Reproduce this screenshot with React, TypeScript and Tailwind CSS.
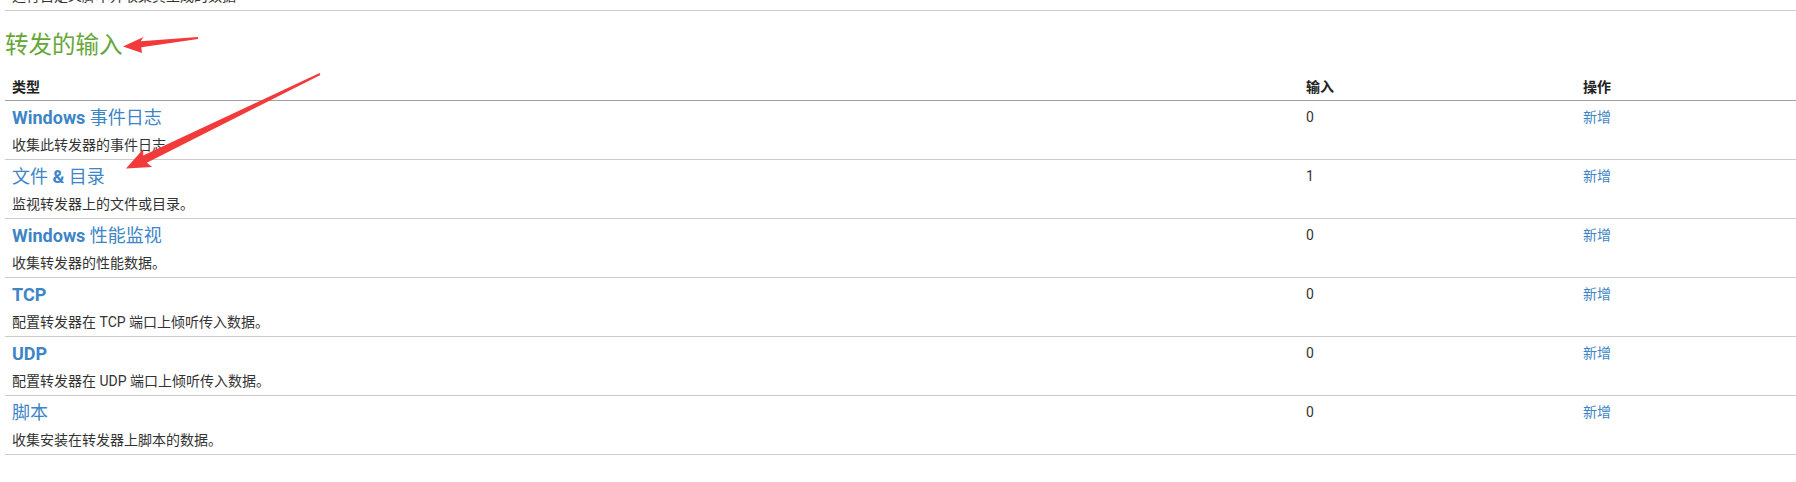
import React from "react";

const FONT = 'Roboto, "Noto Sans CJK SC", sans-serif';

function Title({ text }: { text: string }) {
  const parts = text.split(/([\u4e00-\u9fff]+)/).filter((p) => p.length > 0);
  return (
    <div className="text-[18px] leading-[24px] font-bold text-[#3d85c6]">
      {parts.map((p, i) =>
        /[\u4e00-\u9fff]/.test(p) ? (
          <span key={i} className="font-normal">
            {p}
          </span>
        ) : (
          <span key={i}>{p}</span>
        )
      )}
    </div>
  );
}

const rows = [
  { title: "Windows 事件日志", desc: "收集此转发器的事件日志", count: "0" },
  { title: "文件 & 目录", desc: "监视转发器上的文件或目录。", count: "1" },
  { title: "Windows 性能监视", desc: "收集转发器的性能数据。", count: "0" },
  { title: "TCP", desc: "配置转发器在 TCP 端口上倾听传入数据。", count: "0" },
  { title: "UDP", desc: "配置转发器在 UDP 端口上倾听传入数据。", count: "0" },
  { title: "脚本", desc: "收集安装在转发器上脚本的数据。", count: "0" },
];

export default function App() {
  return (
    <div
      className="relative w-full min-h-[482px] bg-white pl-[5px] text-[#333]"
      style={{ fontFamily: FONT }}
    >
      <div className="h-[11px] overflow-hidden border-b border-[#cccccc] pl-[7px]">
        <div className="-mt-[14px] text-[14px] leading-[20px]">运行自定义脚本并收集其生成的数据</div>
      </div>

      <h2
        className="mt-[16px] h-[31px] text-[23.5px] leading-[32px] font-normal text-[#65a637]"
        style={{ fontFamily: '"Noto Sans CJK SC", serif' }}
      >
        转发的输入
      </h2>

      <div className="grid h-[43px] grid-cols-[1294px_277px_1fr] border-b border-[#a0a0a0] pt-[19px] text-[14px] leading-[20px] font-bold text-[#222]">
        <div className="pl-[7px]">类型</div>
        <div className="pl-[7px]">输入</div>
        <div className="pl-[7px]">操作</div>
      </div>

      {rows.map((r) => (
        <div
          key={r.title}
          className="grid h-[59px] grid-cols-[1294px_277px_1fr] border-b border-[#cccccc] pt-[5px]"
        >
          <div className="pl-[7px]">
            <Title text={r.title} />
            <div className="mt-[5px] text-[14px] leading-[20px] text-[#333]">{r.desc}</div>
          </div>
          <div className="pl-[7px] pt-[1px] text-[14px] leading-[20px] text-[#333]">{r.count}</div>
          <div className="pl-[7px] pt-[1px] text-[14px] leading-[20px] text-[#3d85c6]">新增</div>
        </div>
      ))}

      <svg
        className="pointer-events-none absolute left-0 top-0"
        width="1796"
        height="482"
        viewBox="0 0 1796 482"
      >
        <polygon
          points="198,37.1 140.7,41.2 143.5,37 123,46.5 142,53 141.3,47.2 198,38.9"
          fill="#f23a3a"
        />
        <polygon
          points="319.6,73.1 143.2,155.6 143.3,148.9 126,168.5 152.1,166.9 146.8,162.8 320.4,74.9"
          fill="#f23a3a"
        />
      </svg>
    </div>
  );
}
